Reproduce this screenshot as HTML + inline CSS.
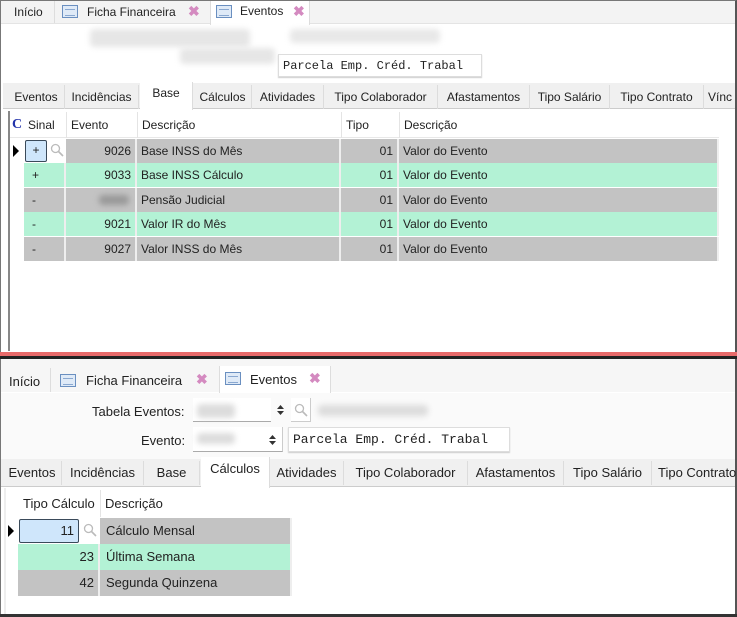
<!DOCTYPE html>
<html><head><meta charset="utf-8">
<style>
*{margin:0;padding:0;box-sizing:border-box}
body{width:737px;height:617px;position:relative;overflow:hidden;background:#fff;font-family:"Liberation Sans",sans-serif;font-size:12px;color:#222}
.a{position:absolute;white-space:nowrap}
.tabs{background:#f0f0f0}
.st{position:absolute;height:24px;line-height:24px;border-right:1px solid #dcdcdc;text-align:center;font-size:12px}
.mono{font-family:"Liberation Mono",monospace;font-size:12px}
.blur{position:absolute;background:#dcdcdc;filter:blur(3px);border-radius:4px}
.ico{position:absolute;width:16px;height:13px;border:1px solid #6a8fc0;background:#dfeaf7}
.ico:after{content:"";position:absolute;left:2px;top:3px;width:10px;height:5px;border-top:1px solid #8aa8d0;border-bottom:1px solid #8aa8d0}
.x{position:absolute;color:#d48ac0;font-weight:bold;font-size:14px}
.row{position:absolute;left:0;height:24px;line-height:24px}
.c{position:absolute;top:0;height:100%;border-right:2px solid #eee;padding:0 4px}
.g{background:#c3c3c3}.gr{background:#b3f2d5}
.mag{position:absolute}
</style></head><body>
<div class="a" style="left:0;top:0;width:737px;height:617px;border:1px solid #777;border-right:2px solid #555"></div>

<div class="a" style="left:1px;top:1px;width:734px;height:23px;background:#f3f3f3;border-bottom:1px solid #e4e4e4"></div>
<div class="a" style="left:3px;top:1px;width:52px;height:22px;border-right:1px solid #ddd"></div>
<div class="a" style="left:14px;top:5px">Início</div>
<div class="ico" style="left:62px;top:5px"></div>
<div class="a" style="left:87px;top:5px">Ficha Financeira</div>
<div class="x" style="left:188px;top:3px">✖</div>
<div class="a" style="left:210px;top:1px;width:100px;height:24px;background:#fff;border-left:1px solid #ddd;border-right:1px solid #ddd"></div>
<div class="ico" style="left:216px;top:5px"></div>
<div class="a" style="left:240px;top:4px">Eventos</div>
<div class="x" style="left:293px;top:3px">✖</div>
<div class="blur" style="left:90px;top:29px;width:160px;height:18px;background:#e6e6e6"></div>
<div class="blur" style="left:290px;top:29px;width:150px;height:14px;background:#e8e8e8"></div>
<div class="blur" style="left:180px;top:48px;width:95px;height:16px;background:#e6e6e6"></div>
<div class="a mono" style="left:278px;top:54px;width:204px;height:23px;line-height:22px;padding-left:4px;border:1px solid #ddd;box-shadow:0 1px 1px #ccc">Parcela Emp. Créd. Trabal</div>

<div class="a tabs" style="left:3px;top:83px;width:732px;height:26px;border-bottom:1px solid #ccc"></div>
<div class="st" style="left:8px;top:85px;width:57px">Eventos</div>
<div class="st" style="left:65px;top:85px;width:74px">Incidências</div>
<div class="st" style="left:140px;top:82px;width:53px;background:#fff;height:28px;line-height:22px">Base</div>
<div class="st" style="left:194px;top:85px;width:58px">Cálculos</div>
<div class="st" style="left:252px;top:85px;width:72px">Atividades</div>
<div class="st" style="left:324px;top:85px;width:114px">Tipo Colaborador</div>
<div class="st" style="left:438px;top:85px;width:92px">Afastamentos</div>
<div class="st" style="left:530px;top:85px;width:80px">Tipo Salário</div>
<div class="st" style="left:610px;top:85px;width:94px">Tipo Contrato</div>
<div class="st" style="left:704px;top:85px;width:40px;text-align:left;padding-left:4px">Vínc</div>

<div class="a" style="left:8px;top:111px;width:2px;height:240px;background:#888"></div>
<div class="a" style="left:10px;top:112px;width:709px;height:26px;background:#fff;border-bottom:1px solid #e8e8e8"></div>
<div class="a" style="left:12px;top:117px;color:#2233aa;font-weight:bold;font-family:'Liberation Serif',serif;font-size:14px">C</div>
<div class="a" style="left:28px;top:118px">Sinal</div>
<div class="a" style="left:66px;top:112px;height:26px;border-left:1px solid #e4e4e4;padding-left:4px;line-height:26px">Evento</div>
<div class="a" style="left:137px;top:112px;height:26px;border-left:1px solid #e4e4e4;padding-left:4px;line-height:26px">Descrição</div>
<div class="a" style="left:341px;top:112px;height:26px;border-left:1px solid #e4e4e4;padding-left:4px;line-height:26px">Tipo</div>
<div class="a" style="left:399px;top:112px;height:26px;border-left:1px solid #e4e4e4;padding-left:4px;line-height:26px">Descrição</div>

<div class="a" style="left:24px;top:139px;width:695px;height:123px">
 <div class="row g" style="top:0;width:695px"><div class="c" style="left:42px;width:71px;text-align:right">9026</div><div class="c" style="left:113px;width:204px">Base INSS do Mês</div><div class="c" style="left:317px;width:58px;text-align:right">01</div><div class="c" style="left:375px;width:320px">Valor do Evento</div></div>
 <div class="row gr" style="top:24px;width:695px"><div class="c" style="left:0;width:42px;padding-left:8px">+</div><div class="c" style="left:42px;width:71px;text-align:right">9033</div><div class="c" style="left:113px;width:204px">Base INSS Cálculo</div><div class="c" style="left:317px;width:58px;text-align:right">01</div><div class="c" style="left:375px;width:320px">Valor do Evento</div></div>
 <div class="row g" style="top:49px;width:695px"><div class="c" style="left:0;width:42px;padding-left:8px">-</div><div class="c" style="left:42px;width:71px"><span class="blur" style="right:6px;top:7px;width:30px;height:10px;background:#999"></span></div><div class="c" style="left:113px;width:204px">Pensão Judicial</div><div class="c" style="left:317px;width:58px;text-align:right">01</div><div class="c" style="left:375px;width:320px">Valor do Evento</div></div>
 <div class="row gr" style="top:73px;width:695px"><div class="c" style="left:0;width:42px;padding-left:8px">-</div><div class="c" style="left:42px;width:71px;text-align:right">9021</div><div class="c" style="left:113px;width:204px">Valor IR do Mês</div><div class="c" style="left:317px;width:58px;text-align:right">01</div><div class="c" style="left:375px;width:320px">Valor do Evento</div></div>
 <div class="row g" style="top:98px;width:695px"><div class="c" style="left:0;width:42px;padding-left:8px">-</div><div class="c" style="left:42px;width:71px;text-align:right">9027</div><div class="c" style="left:113px;width:204px">Valor INSS do Mês</div><div class="c" style="left:317px;width:58px;text-align:right">01</div><div class="c" style="left:375px;width:320px">Valor do Evento</div></div>
</div>
<div class="a" style="left:24px;top:139px;width:42px;height:24px;background:#fff"></div>
<div class="a" style="left:25px;top:140px;width:22px;height:22px;background:#cfe6fb;border:1.5px solid #3a4a5a;border-radius:2px;text-align:center;line-height:18px">+</div>
<svg class="mag" style="left:50px;top:143px" width="14" height="14" viewBox="0 0 14 14"><circle cx="5.5" cy="5.5" r="4" fill="none" stroke="#bbb" stroke-width="1.3"/><path d="M8.5 8.5 L13 13" stroke="#bbb" stroke-width="1.6"/></svg>
<div class="a" style="left:13px;top:145px;width:0;height:0;border-left:6px solid #000;border-top:6px solid transparent;border-bottom:6px solid transparent"></div>

<div class="a" style="left:0;top:352px;width:737px;height:4px;background:#e86a6a"></div>
<div class="a" style="left:0;top:356px;width:737px;height:3px;background:#222"></div>

<div class="a" style="left:1px;top:359px;width:734px;height:33px;background:#f6f6f6"></div>
<div class="a" style="left:3px;top:368px;width:48px;height:24px;border-right:1px solid #ddd"></div>
<div class="a" style="left:9px;top:374px;font-size:13px">Início</div>
<div class="ico" style="left:60px;top:374px"></div>
<div class="a" style="left:86px;top:373px;font-size:13px">Ficha Financeira</div>
<div class="x" style="left:196px;top:371px">✖</div>
<div class="a" style="left:219px;top:366px;width:112px;height:27px;background:#fff;border-left:1px solid #ddd;border-right:1px solid #ddd"></div>
<div class="ico" style="left:225px;top:372px"></div>
<div class="a" style="left:250px;top:372px;font-size:13px">Eventos</div>
<div class="x" style="left:309px;top:370px">✖</div>
<div class="a" style="left:1px;top:393px;width:734px;height:66px;background:#fafafa"></div>
<div class="a" style="left:92px;top:404px;font-size:13px">Tabela Eventos:</div>
<div class="a" style="left:193px;top:398px;width:78px;height:24px;background:#fff;border-bottom:1px solid #aaa"></div>
<div class="blur" style="left:197px;top:404px;width:38px;height:14px"></div>
<svg class="mag" style="left:277px;top:405px" width="7" height="10" viewBox="0 0 7 10"><path d="M0 4 L3.5 0 L7 4Z M0 6 L3.5 10 L7 6Z" fill="#333"/></svg>
<div class="a" style="left:291px;top:398px;width:20px;height:24px;background:#fff;border-right:1px solid #ccc;border-bottom:1px solid #ccc"></div>
<svg class="mag" style="left:294px;top:403px" width="14" height="14" viewBox="0 0 14 14"><circle cx="5.5" cy="5.5" r="4" fill="none" stroke="#bbb" stroke-width="1.3"/><path d="M8.5 8.5 L13 13" stroke="#bbb" stroke-width="1.6"/></svg>
<div class="blur" style="left:318px;top:405px;width:110px;height:11px"></div>
<div class="a" style="left:141px;top:433px;font-size:13px">Evento:</div>
<div class="a" style="left:193px;top:427px;width:90px;height:25px;background:#fff;border-right:1px solid #ccc;border-bottom:1px solid #aaa"></div>
<div class="blur" style="left:197px;top:433px;width:38px;height:11px"></div>
<svg class="mag" style="left:269px;top:435px" width="7" height="10" viewBox="0 0 7 10"><path d="M0 4 L3.5 0 L7 4Z M0 6 L3.5 10 L7 6Z" fill="#333"/></svg>
<div class="a mono" style="left:288px;top:427px;width:222px;height:25px;line-height:23px;padding-left:4px;background:#fff;border:1px solid #ddd;box-shadow:0 1px 1px #ccc;font-size:13px">Parcela Emp. Créd. Trabal</div>

<div class="a tabs" style="left:1px;top:459px;width:734px;height:28px;border-bottom:1px solid #ccc"></div>
<div class="st" style="left:3px;top:461px;width:59px;font-size:13px">Eventos</div>
<div class="st" style="left:62px;top:461px;width:82px;font-size:13px">Incidências</div>
<div class="st" style="left:144px;top:461px;width:56px;font-size:13px">Base</div>
<div class="st" style="left:201px;top:457px;width:69px;font-size:13px;background:#fff;height:31px;line-height:24px">Cálculos</div>
<div class="st" style="left:270px;top:461px;width:74px;font-size:13px">Atividades</div>
<div class="st" style="left:344px;top:461px;width:124px;font-size:13px">Tipo Colaborador</div>
<div class="st" style="left:468px;top:461px;width:96px;font-size:13px">Afastamentos</div>
<div class="st" style="left:564px;top:461px;width:88px;font-size:13px">Tipo Salário</div>
<div class="st" style="left:652px;top:461px;width:90px;font-size:13px;text-align:left;padding-left:6px">Tipo Contrato</div>

<div class="a" style="left:4px;top:488px;width:2px;height:126px;background:#eee"></div>
<div class="a" style="left:18px;top:490px;width:274px;height:27px;background:#fff"></div>
<div class="a" style="left:23px;top:496px;font-size:13px">Tipo Cálculo</div>
<div class="a" style="left:100px;top:490px;height:27px;border-left:1px solid #e4e4e4;padding-left:4px;line-height:27px;font-size:13px">Descrição</div>
<div class="a" style="left:18px;top:518px;width:274px;height:78px;font-size:13px">
 <div class="row g" style="top:0;width:274px;height:26px;line-height:26px"><div class="c" style="left:82px;width:192px;padding-left:6px">Cálculo Mensal</div></div>
 <div class="row gr" style="top:26px;width:274px;height:26px;line-height:26px"><div class="c" style="left:0;width:82px;text-align:right;padding-right:4px">23</div><div class="c" style="left:82px;width:192px;padding-left:6px">Última Semana</div></div>
 <div class="row g" style="top:52px;width:274px;height:26px;line-height:26px"><div class="c" style="left:0;width:82px;text-align:right;padding-right:4px">42</div><div class="c" style="left:82px;width:192px;padding-left:6px">Segunda Quinzena</div></div>
</div>
<div class="a" style="left:18px;top:518px;width:82px;height:26px;background:#fff"></div>
<div class="a" style="left:19px;top:519px;width:60px;height:24px;background:#cfe6fb;border:1.5px solid #3a4a5a;border-radius:2px;text-align:right;padding-right:4px;line-height:21px;font-size:13px">11</div>
<svg class="mag" style="left:83px;top:523px" width="14" height="14" viewBox="0 0 14 14"><circle cx="5.5" cy="5.5" r="4" fill="none" stroke="#bbb" stroke-width="1.3"/><path d="M8.5 8.5 L13 13" stroke="#bbb" stroke-width="1.6"/></svg>
<div class="a" style="left:8px;top:525px;width:0;height:0;border-left:6px solid #000;border-top:6px solid transparent;border-bottom:6px solid transparent"></div>
<div class="a" style="left:0;top:614px;width:737px;height:3px;background:#333"></div>
</body></html>
